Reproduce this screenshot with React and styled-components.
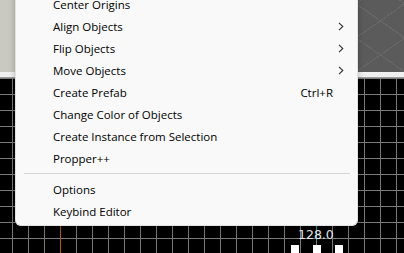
import styled, { createGlobalStyle } from "styled-components";

const GlobalStyle = createGlobalStyle`
  html, body {
    margin: 0;
    padding: 0;
    width: 404px;
    height: 253px;
    overflow: hidden;
    background: #000;
  }
`;

// ====== BACKGROUND (editor viewports) ======
const Screen = styled.div`
  position: relative;
  width: 404px;
  height: 253px;
  display: flex;
  flex-direction: column;
  overflow: hidden;
`;

const TopRow = styled.div`
  display: flex;
  height: 72px;
`;

const SidePanel = styled.div`
  width: 15px;
  background: #c9c9c1;
`;

const Viewport3D = styled.div`
  flex: 1;
  background-color: #5b5b5b;
  background-image:
    repeating-linear-gradient(35deg, transparent 0 27px, #686868 27px 28px),
    repeating-linear-gradient(-35deg, transparent 0 27px, #686868 27px 28px);
`;

const Splitter = styled.div`
  height: 5px;
  background: #f0f0f0;
  border-bottom: 1px solid #9c9c9c;
`;

const Grid2D = styled.div`
  position: relative;
  flex: 1;
  background-color: #000;
  background-image:
    linear-gradient(to right, #7a7a7a 1px, transparent 1px),
    linear-gradient(to bottom, #7a7a7a 1px, transparent 1px);
  background-size: 16px 16px;
  background-position: 12px 0px;
`;

const AxisLine = styled.div`
  position: absolute;
  left: ${(p) => p.x}px;
  top: ${(p) => p.top}px;
  width: 1px;
  height: ${(p) => p.h}px;
  background: ${(p) => p.color};
`;

const SizeLabel = styled.div`
  position: absolute;
  left: 298px;
  top: 149px;
  font-family: "DejaVu Sans", sans-serif;
  font-size: 12.5px;
  color: #e8e8e8;
  line-height: 15px;
`;

const Handles = styled.div`
  position: absolute;
  left: 291px;
  top: 167px;
  display: flex;
  gap: 14px;
`;

const Handle = styled.div`
  width: 8px;
  height: 8px;
  background: #fff;
`;

// ====== CONTEXT MENU ======
const Menu = styled.div`
  position: absolute;
  left: 15px;
  top: -9px;
  width: 343px;
  box-sizing: border-box;
  padding: 2px 0 3px;
  background: #f9f9f9;
  border: 1px solid #e2e2e2;
  border-top: none;
  border-radius: 0 0 6px 6px;
  box-shadow: 0 2px 6px rgba(0, 0, 0, 0.25);
  font-family: "Open Sans", "Noto Sans", sans-serif;
  font-size: 11.5px;
  color: #000;
`;

const Item = styled.div`
  display: grid;
  grid-template-columns: 1fr auto 24px;
  align-items: center;
  height: 22px;
  padding-left: 37px;
`;

const Label = styled.span`
  white-space: nowrap;
`;

const Shortcut = styled.span`
  white-space: nowrap;
`;

const Arrow = styled.span`
  display: flex;
  align-items: center;
  padding-left: 5px;
  color: #333;
`;

const Separator = styled.div`
  height: 1px;
  margin: 4px 7px 4px 8px;
  background: #d6d6d6;
`;

const Chevron = () => (
  <svg width="6" height="9" viewBox="0 0 6 9">
    <path d="M1 0.8 L4.8 4.5 L1 8.2" fill="none" stroke="#333" strokeWidth="1.1" />
  </svg>
);

const items = [
  { label: "Center Origins" },
  { label: "Align Objects", sub: true },
  { label: "Flip Objects", sub: true },
  { label: "Move Objects", sub: true },
  { label: "Create Prefab", shortcut: "Ctrl+R" },
  { label: "Change Color of Objects" },
  { label: "Create Instance from Selection" },
  { label: "Propper++" },
  { separator: true },
  { label: "Options" },
  { label: "Keybind Editor" },
];

export default function App() {
  return (
    <>
      <GlobalStyle />
      <Screen>
        <TopRow>
          <SidePanel />
          <Viewport3D />
        </TopRow>
        <Splitter />
        <Grid2D>
          <AxisLine x={60} top={0} h={175} color="#b35a10" />
          <AxisLine x={316} top={140} h={23} color="#1f9a9a" />
          <SizeLabel>128.0</SizeLabel>
          <Handles>
            <Handle />
            <Handle />
            <Handle />
          </Handles>
        </Grid2D>

        <Menu>
          {items.map((it, i) =>
            it.separator ? (
              <Separator key={i} />
            ) : (
              <Item key={i}>
                <Label>{it.label}</Label>
                <Shortcut>{it.shortcut || ""}</Shortcut>
                <Arrow>{it.sub && <Chevron />}</Arrow>
              </Item>
            )
          )}
        </Menu>
      </Screen>
    </>
  );
}
